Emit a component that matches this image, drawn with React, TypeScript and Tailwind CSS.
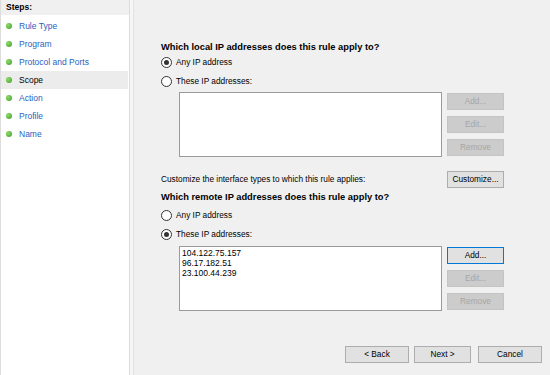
import React from 'react'

const steps = ['Rule Type', 'Program', 'Protocol and Ports', 'Scope', 'Action', 'Profile', 'Name']

function Radio({ checked, label }: { checked?: boolean; label: string }) {
  return (
    <div className="flex items-center h-[14px]">
      <span className="w-[11px] h-[11px] rounded-full border border-[#333333] bg-white flex items-center justify-center">
        {checked && <span className="w-[5px] h-[5px] rounded-full bg-[#333333]" />}
      </span>
      <span className="ml-[4px]">{label}</span>
    </div>
  )
}

function Btn({ label, disabled, focused, w = 'w-[57px]' }: { label: string; disabled?: boolean; focused?: boolean; w?: string }) {
  const base = 'h-[17px] flex items-center justify-center border ' + w
  if (disabled) return <div className={base + ' bg-[#cccccc] border-[#c4c4c4] text-[#a6a6a6]'}>{label}</div>
  if (focused) return <div className={base + ' bg-[#e1e1e1] border-[#0078d7] text-black'}>{label}</div>
  return <div className={base + ' bg-[#e1e1e1] border-[#adadad] text-black'}>{label}</div>
}

function Listbox({ lines, children }: { lines: string[]; children: React.ReactNode }) {
  return (
    <div className="flex ml-[18px]">
      <div className="w-[263px] h-[65px] bg-white border border-[#9a9a9a] pl-[2px] pt-[1px] leading-[10px] text-[8.5px]">
        {lines.map((l) => (
          <div key={l}>{l}</div>
        ))}
      </div>
      <div className="ml-[5px] mt-[1px] flex flex-col gap-[6px]">{children}</div>
    </div>
  )
}

export default function App() {
  return (
    <div className="w-[550px] h-[375px] flex bg-[#f0f0f0] text-black text-[8.3px] leading-none overflow-hidden font-['Liberation_Sans',Arial,sans-serif]">
      <aside className="w-[130px] h-full bg-white border-l border-r border-[#dcdcdc] flex flex-col text-[8.5px]">
        <div className="h-[15px] bg-[#f0f0f0] flex items-center pl-[5px] font-bold">Steps:</div>
        <ul className="mt-[2px]">
          {steps.map((s) => (
            <li
              key={s}
              className={
                'h-[18px] flex items-center mr-[1px] ' +
                (s === 'Scope' ? 'bg-[#ececec] text-black' : 'text-[#2a62c0]')
              }
            >
              <span className="ml-[5px] w-[6px] h-[6px] rounded-full bg-[radial-gradient(circle_at_35%_35%,#8fdc6a,#3a9a22)]" />
              <span className="ml-[7px]">{s}</span>
            </li>
          ))}
        </ul>
      </aside>
      <div className="w-[4px] h-full bg-[#f6f6f6] border-r border-[#e2e2e2]" />

      <main className="flex-1 flex flex-col">
        <div className="w-[343px] ml-[27px] mt-[42px] flex flex-col">
          <div className="h-[12px] flex items-center font-bold text-[9.3px]">Which local IP addresses does this rule apply to?</div>
          <div className="mt-[1px]">
            <Radio checked label="Any IP address" />
          </div>
          <div className="mt-[5px]">
            <Radio label="These IP addresses:" />
          </div>
          <div className="mt-[4px]">
            <Listbox lines={[]}>
              <Btn label="Add..." disabled />
              <Btn label="Edit..." disabled />
              <Btn label="Remove" disabled />
            </Listbox>
          </div>

          <div className="mt-[14px] flex items-center justify-between">
            <span>Customize the interface types to which this rule applies:</span>
            <Btn label="Customize..." />
          </div>

          <div className="mt-[4px] h-[12px] flex items-center font-bold text-[9.3px]">Which remote IP addresses does this rule apply to?</div>
          <div className="mt-[4px]">
            <Radio label="Any IP address" />
          </div>
          <div className="mt-[5px]">
            <Radio checked label="These IP addresses:" />
          </div>
          <div className="mt-[5px]">
            <Listbox lines={['104.122.75.157', '96.17.182.51', '23.100.44.239']}>
              <Btn label="Add..." focused />
              <Btn label="Edit..." disabled />
              <Btn label="Remove" disabled />
            </Listbox>
          </div>
        </div>

        <div className="mt-[35px] flex justify-end pr-[8px]">
          <Btn label="< Back" w="w-[64px]" />
          <div className="ml-[5px]">
            <Btn label="Next >" />
          </div>
          <div className="ml-[7px]">
            <Btn label="Cancel" w="w-[64px]" />
          </div>
        </div>
      </main>
    </div>
  )
}
